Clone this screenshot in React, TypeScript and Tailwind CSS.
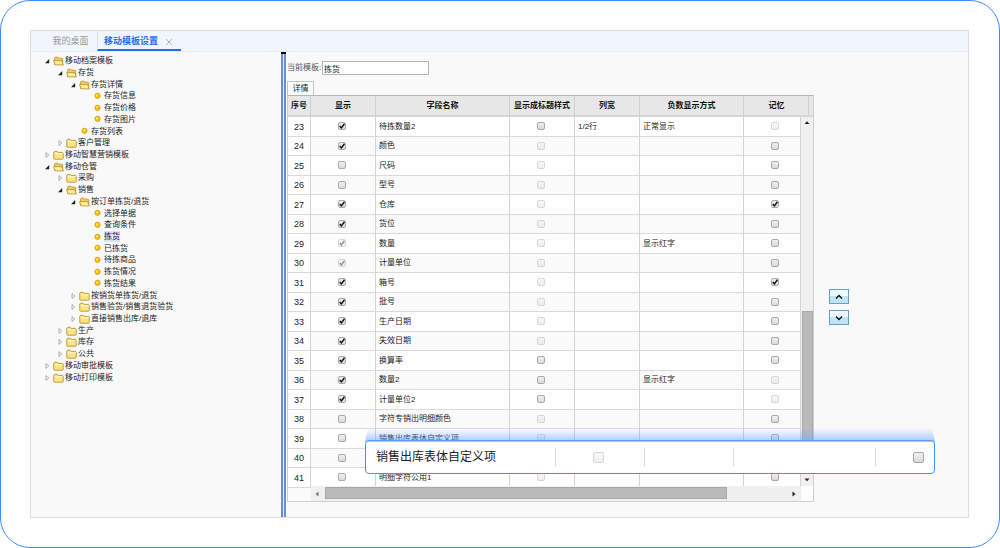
import { useState } from "react";

type NodeKind = "open" | "closed" | "leaf";

interface TreeNode {
  depth: number;
  kind: NodeKind;
  label: string;
}

interface FieldRow {
  no: number;
  name: string;
  show: boolean;
  showLocked?: boolean;
  titleStyle: boolean;
  width?: string;
  negative?: string;
  memory: boolean;
  memoryLocked?: boolean;
}

const treeNodes: TreeNode[] = [
  { depth: 0, kind: "open", label: "移动档案模板" },
  { depth: 1, kind: "open", label: "存货" },
  { depth: 2, kind: "open", label: "存货详情" },
  { depth: 3, kind: "leaf", label: "存货信息" },
  { depth: 3, kind: "leaf", label: "存货价格" },
  { depth: 3, kind: "leaf", label: "存货图片" },
  { depth: 2, kind: "leaf", label: "存货列表" },
  { depth: 1, kind: "closed", label: "客户管理" },
  { depth: 0, kind: "closed", label: "移动智慧营销模板" },
  { depth: 0, kind: "open", label: "移动仓管" },
  { depth: 1, kind: "closed", label: "采购" },
  { depth: 1, kind: "open", label: "销售" },
  { depth: 2, kind: "open", label: "按订单拣货/退货" },
  { depth: 3, kind: "leaf", label: "选择单据" },
  { depth: 3, kind: "leaf", label: "查询条件" },
  { depth: 3, kind: "leaf", label: "拣货" },
  { depth: 3, kind: "leaf", label: "已拣货" },
  { depth: 3, kind: "leaf", label: "待拣商品" },
  { depth: 3, kind: "leaf", label: "拣货情况" },
  { depth: 3, kind: "leaf", label: "拣货结果" },
  { depth: 2, kind: "closed", label: "按销货单拣货/退货" },
  { depth: 2, kind: "closed", label: "销售验货/销售退货验货" },
  { depth: 2, kind: "closed", label: "直接销售出库/退库" },
  { depth: 1, kind: "closed", label: "生产" },
  { depth: 1, kind: "closed", label: "库存" },
  { depth: 1, kind: "closed", label: "公共" },
  { depth: 0, kind: "closed", label: "移动审批模板" },
  { depth: 0, kind: "closed", label: "移动打印模板" },
];

// titleStyle: true 表示该行可以勾选“显示成标题样式”
const rows: FieldRow[] = [
  { no: 23, name: "待拣数量2", show: true, titleStyle: true, width: "1/2行", negative: "正常显示", memory: false, memoryLocked: true },
  { no: 24, name: "颜色", show: true, titleStyle: false, memory: false },
  { no: 25, name: "尺码", show: false, titleStyle: false, memory: false },
  { no: 26, name: "型号", show: false, titleStyle: false, memory: false },
  { no: 27, name: "仓库", show: true, titleStyle: false, memory: true },
  { no: 28, name: "货位", show: true, titleStyle: false, memory: false },
  { no: 29, name: "数量", show: true, showLocked: true, titleStyle: false, negative: "显示红字", memory: false },
  { no: 30, name: "计量单位", show: true, showLocked: true, titleStyle: false, memory: false },
  { no: 31, name: "箱号", show: true, titleStyle: false, memory: true },
  { no: 32, name: "批号", show: true, titleStyle: false, memory: false },
  { no: 33, name: "生产日期", show: true, titleStyle: false, memory: false },
  { no: 34, name: "失效日期", show: true, titleStyle: false, memory: false },
  { no: 35, name: "换算率", show: true, titleStyle: true, memory: false },
  { no: 36, name: "数量2", show: true, titleStyle: true, negative: "显示红字", memory: false, memoryLocked: true },
  { no: 37, name: "计量单位2", show: true, titleStyle: true, memory: false, memoryLocked: true },
  { no: 38, name: "字符专销出明细颜色", show: false, titleStyle: false, memory: false },
  { no: 39, name: "销售出库表体自定义项", show: false, titleStyle: false, memory: false },
  { no: 40, name: "", show: false, titleStyle: false, memory: false },
  { no: 41, name: "明细字符公用1", show: false, titleStyle: false, memory: false },
];

const headers = ["序号", "显示", "字段名称", "显示成标题样式", "列宽", "负数显示方式", "记忆"];

const indent = ["pl-[13px]", "pl-[26px]", "pl-[39px]", "pl-[52px]"];

function Checkbox({
  label,
  defaultChecked = false,
  disabled = false,
  large = false,
}: {
  label: string;
  defaultChecked?: boolean;
  disabled?: boolean;
  large?: boolean;
}) {
  const [checked, setChecked] = useState(defaultChecked);
  const size = large ? "size-[11px]" : "size-[8px]";

  return (
    <span className={`inline-grid align-middle ${size} ${disabled ? "opacity-45" : ""}`}>
      <input
        type="checkbox"
        aria-label={label}
        checked={checked}
        disabled={disabled}
        onChange={(e) => setChecked(e.target.checked)}
        className={`col-start-1 row-start-1 appearance-none rounded-[2px] border border-[#a9a9a9] bg-linear-to-b from-[#f0f0f0] to-[#dadada] ${size}`}
      />
      {checked && (
        <svg viewBox="0 0 9 9" className={`pointer-events-none col-start-1 row-start-1 ${size}`}>
          <path d="M2 4.6 3.8 6.6 7.3 2" fill="none" stroke="#111" strokeWidth="1.6" />
        </svg>
      )}
    </span>
  );
}

function Folder({ open }: { open: boolean }) {
  return (
    <svg viewBox="0 0 11 10" className="mt-px h-[10px] w-[11px] shrink-0">
      {open ? (
        <>
          <path d="M1.6 8.5V2l.7-.8h2.6l.9 1h3.4l.5.6v5.7z" fill="#f0cd62" stroke="#b98c2a" strokeWidth=".8" />
          <path d="M.5 4.6h8l1.9 4.3H2.2z" fill="#fdee9c" stroke="#b98c2a" strokeWidth=".8" />
        </>
      ) : (
        <>
          <path d="M.8 8.7V2.1l.7-.8h2.7l.9 1.1h4.5l.6.7v5.6l-.5.5H1.3z" fill="#fbe482" stroke="#bd9034" strokeWidth=".9" />
          <path d="M1.6 3.8h7.9" stroke="#fffbe0" strokeWidth=".9" />
        </>
      )}
    </svg>
  );
}

function TreeRow({ node, active, onSelect }: { node: TreeNode; active: boolean; onSelect: () => void }) {
  return (
    <li className={`flex min-h-0 items-center ${indent[node.depth]}`}>
      <svg viewBox="0 0 6 6" className="mr-[3px] mt-px size-[6px] shrink-0">
        {node.kind === "open" && <path d="M5.2 1v4.2H1z" fill="#222" />}
        {node.kind === "closed" && <path d="M2 .6v4.8L4.8 3z" fill="#fff" stroke="#8c8c8c" strokeWidth=".7" />}
      </svg>
      {node.kind === "leaf" ? (
        <svg viewBox="0 0 11 10" className="h-[10px] w-[11px] shrink-0">
          <circle cx="5.5" cy="4.8" r="2.6" fill="#fdc80c" stroke="#d98d10" strokeWidth=".8" />
          <circle cx="4.9" cy="4.3" r="1.1" fill="#ffe94a" />
        </svg>
      ) : (
        <Folder open={node.kind === "open"} />
      )}
      <button
        type="button"
        onClick={onSelect}
        className={`ml-px whitespace-nowrap leading-[11px] ${active ? "bg-[#d6e6fa]" : ""}`}
      >
        {node.label}
      </button>
    </li>
  );
}

function GridTable() {
  return (
    <table className="w-full table-fixed border-separate border-spacing-0 text-[8px] leading-[10px] text-[#222]">
      <colgroup>
        <col className="w-[23px]" />
        <col className="w-[65px]" />
        <col />
        <col className="w-[65px]" />
        <col className="w-[65px]" />
        <col className="w-[104px]" />
        <col className="w-[57px]" />
      </colgroup>
      <thead>
        <tr className="h-[21px]">
          {headers.map((title) => (
            <th
              key={title}
              className="whitespace-nowrap border-b-2 border-r border-b-[#d6d6d6] border-r-[#cfcfcf] bg-[#e7e7e7] p-0 font-bold text-[#111] last:border-r-0 last:pl-[8px]"
            >
              {title}
            </th>
          ))}
        </tr>
      </thead>
      <tbody>
        {rows.map((row) => (
          <tr
            key={row.no}
            className="h-[19px] odd:h-[20px] odd:bg-white even:bg-[#fafafa] [&>td]:border-b [&>td]:border-r [&>td]:border-b-[#dadada] [&>td]:border-r-[#d3d3d3]"
          >
            <td className="bg-white p-0 text-center text-[9px]">{row.no}</td>
            <td className="p-0 pr-[2px] text-center">
              <Checkbox label={`显示 ${row.name}`} defaultChecked={row.show} disabled={row.showLocked} />
            </td>
            <td className="p-0 pl-[3px]">
              <span className="block truncate">{row.name}</span>
            </td>
            <td className="p-0 pr-[2px] text-center">
              <Checkbox label={`显示成标题样式 ${row.name}`} disabled={!row.titleStyle} />
            </td>
            <td className="p-0 pl-[3px]">{row.width}</td>
            <td className="p-0 pl-[3px]">{row.negative}</td>
            <td className="border-r-white p-0 pl-[6px] text-center">
              <Checkbox label={`记忆 ${row.name}`} defaultChecked={row.memory} disabled={row.memoryLocked} />
            </td>
          </tr>
        ))}
      </tbody>
    </table>
  );
}

function HorizontalScrollbar() {
  return (
    <div className="relative -mt-[2px] ml-[23px] flex h-[15px] items-center bg-[#f0f0f0]">
      <svg viewBox="0 0 14 14" className="size-[14px] shrink-0">
        <path d="M7.5 4.5v5L4.5 7z" fill="#777" />
      </svg>
      <div className="flex h-full flex-1 pb-[2px] pt-px">
        <div className="w-[87%] border border-[#a8a8a8] bg-[#bababa]" />
      </div>
      <svg viewBox="0 0 14 14" className="size-[14px] shrink-0">
        <path d="M5.5 4.5v5l3-2.5z" fill="#222" />
      </svg>
    </div>
  );
}

function VerticalScrollbar() {
  return (
    <div className="flex w-[12px] shrink-0 flex-col">
      <div className="flex h-[21px] shrink-0 border-b-2 border-[#d6d6d6] bg-[#e7e7e7]">
        <div className="w-[8px] border-r border-[#cfcfcf]" />
      </div>
      <div className="flex flex-1 flex-col bg-[#f0f0f0]">
        <svg viewBox="0 0 12 12" className="size-[12px] shrink-0">
          <path d="M3.5 7h5L6 4.2z" fill="#222" />
        </svg>
        <div className="flex-[53]" />
        <div className="ml-px flex-[47] border border-[#a8a8a8] bg-[#bababa]" />
        <svg viewBox="0 0 12 12" className="size-[12px] shrink-0">
          <path d="M3.5 4.5h5L6 7.3z" fill="#222" />
        </svg>
      </div>
      <div className="h-[15px] bg-white" />
    </div>
  );
}

function MoveButton({ up }: { up: boolean }) {
  return (
    <button
      type="button"
      aria-label={up ? "上移" : "下移"}
      className="flex h-[15px] w-[20px] items-center justify-center border border-[#6f9db8] bg-linear-to-b from-[#eef9ff] from-50% to-[#bfe4f8] to-50%"
    >
      <svg viewBox="0 0 8 6" className="h-[6px] w-[8px]">
        <path d={up ? "M1 4.6 4 1.6 7 4.6" : "M1 1.4 4 4.4 7 1.4"} fill="none" stroke="#111" strokeWidth="1.4" />
      </svg>
    </button>
  );
}

// 放大显示的一行
function HighlightRow() {
  return (
    <div className="absolute left-[334px] right-[33px] top-[397px]">
      <div className="h-[14px] bg-linear-to-b from-[#6ea6ff]/0 to-[#6ea6ff]/60 [clip-path:polygon(3px_0,calc(100%-3px)_0,100%_100%,0_100%)]" />
      <div className="-mt-[2px] flex h-[34px] items-center rounded-[4px] border border-[#4790fb] bg-white text-[12px]">
        <span className="flex-1 pl-[10px]">销售出库表体自定义项</span>
        <span className="flex h-[18px] w-[89px] items-center justify-center border-l border-[#d6d6d6] pr-[4px]">
          <Checkbox label="显示成标题样式" disabled large />
        </span>
        <span className="h-[18px] w-[89px] border-l border-[#d6d6d6]" />
        <span className="h-[18px] w-[142px] border-l border-[#d6d6d6]" />
        <span className="flex h-[18px] w-[59px] items-center justify-end border-l border-[#d6d6d6] pr-[10px]">
          <Checkbox label="记忆" large />
        </span>
      </div>
    </div>
  );
}

export default function App() {
  const [selected, setSelected] = useState("拣货");
  const [template, setTemplate] = useState("拣货");

  return (
    <div className="flex min-h-screen rounded-[30px] border border-[#3d8bff] bg-white p-[29px] pr-[30px] font-['Liberation_Sans','Noto_Sans_CJK_SC',sans-serif] text-[8px] text-[#222]">
      <div className="relative flex flex-1 flex-col border border-[#dedede] bg-[#f9f9f9]">
        <nav className="flex h-[21px] items-stretch border-b border-[#e6ebf5] bg-[#f1f5fd] pl-[13px] text-[9px]">
          <button type="button" className="w-[53px] pt-[2px] text-center text-[#999]">
            我的桌面
          </button>
          <div className="flex items-center border-b-2 border-l border-b-[#1f6ff2] border-l-[#dde3ee] pl-[6px] pr-[8px] pt-[3px]">
            <button type="button" className="font-bold text-[#1f6ff2]">
              移动模板设置
            </button>
            <button type="button" aria-label="关闭" className="ml-[7px]">
              <svg viewBox="0 0 8 8" className="size-[8px]">
                <path d="M1 1l6 6M7 1 1 7" stroke="#aaa" strokeWidth=".9" />
              </svg>
            </button>
          </div>
        </nav>

        <div className="flex flex-1">
          <aside className="w-[250px] shrink-0 pt-[3px]">
            <ul className="grid h-[328px] auto-rows-fr">
              {treeNodes.map((node) => (
                <TreeRow
                  key={node.label}
                  node={node}
                  active={node.label === selected}
                  onSelect={() => setSelected(node.label)}
                />
              ))}
            </ul>
          </aside>

          <div className="flex w-[5px] shrink-0 flex-col">
            <div className="h-[2px] bg-black" />
            <div className="flex-1 border-x-2 border-[#6790d6] bg-[#e3eefd]" />
          </div>

          <main className="flex min-w-0 flex-1 pl-px">
            <section className="flex min-w-0 flex-1 flex-col">
              <div className="mt-[9px] flex items-center text-[#555]">
                <label htmlFor="template" className="w-[35px] whitespace-nowrap">
                  当前模板:
                </label>
                <input
                  id="template"
                  value={template}
                  onChange={(e) => setTemplate(e.target.value)}
                  className="h-[14px] w-[107px] border border-[#b5b5b5] bg-white px-px text-[#222]"
                />
              </div>
              <div className="mt-[6px] flex">
                <button
                  type="button"
                  className="flex h-[14px] w-[27px] items-center justify-center border border-b-0 border-[#c4c4c4] bg-[#fafafa]"
                >
                  详情
                </button>
              </div>
              <div className="flex border border-[#cfcfcf] border-t-[#b5b5b5] bg-[#fafafa]">
                <div className="min-w-0 flex-1">
                  <GridTable />
                  <HorizontalScrollbar />
                </div>
                <VerticalScrollbar />
              </div>
            </section>
            <div className="flex w-[154px] shrink-0 flex-col gap-[6px] pl-[15px] pt-[237px]">
              <MoveButton up />
              <MoveButton up={false} />
            </div>
          </main>
        </div>

        <HighlightRow />
      </div>
    </div>
  );
}
